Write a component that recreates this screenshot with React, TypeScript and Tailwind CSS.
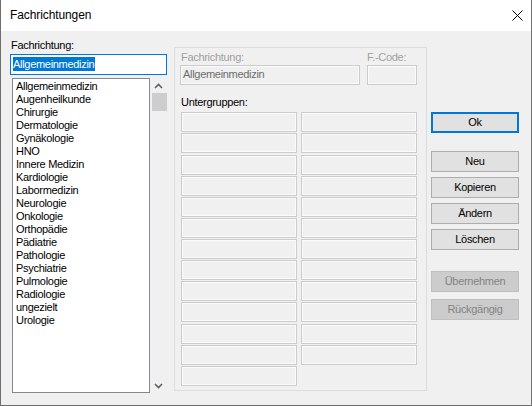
import React from "react";

const items = [
  "Allgemeinmedizin",
  "Augenheilkunde",
  "Chirurgie",
  "Dermatologie",
  "Gynäkologie",
  "HNO",
  "Innere Medizin",
  "Kardiologie",
  "Labormedizin",
  "Neurologie",
  "Onkologie",
  "Orthopädie",
  "Pädiatrie",
  "Pathologie",
  "Psychiatrie",
  "Pulmologie",
  "Radiologie",
  "ungezielt",
  "Urologie",
];

const col1 = [
  "mt-0",
  "mt-[1px]",
  "mt-[2px]",
  "mt-[1px]",
  "mt-[1px]",
  "mt-[1px]",
  "mt-[1px]",
  "mt-[1px]",
  "mt-[1px]",
  "mt-[1px]",
  "mt-[2px]",
  "mt-[1px]",
  "mt-[1px]",
];
const col2 = col1.slice(0, 12);

function Box({ cls }: { cls: string }) {
  return (
    <div
      className={
        cls +
        " h-[20px] w-[116px] border border-[#cccccc] bg-[#f0f0f0] shadow-[inset_0_0_0_1px_#fafafa]"
      }
    />
  );
}

function Btn({ label, cls }: { label: string; cls: string }) {
  return (
    <div
      className={
        cls +
        " h-[21px] w-[88px] border border-[#adadad] bg-[#e1e1e1] flex items-center justify-center"
      }
    >
      {label}
    </div>
  );
}

function DisBtn({ label, cls }: { label: string; cls: string }) {
  return (
    <div
      className={
        cls +
        " h-[21px] w-[88px] border border-[#bfbfbf] bg-[#cccccc] text-[#838383] flex items-center justify-center"
      }
    >
      {label}
    </div>
  );
}

export default function App() {
  return (
    <div className="w-[532px] h-[406px] bg-[#f0f0f0] flex flex-col border-x border-b border-[#6f6f6f] overflow-hidden font-['Liberation_Sans',Arial,sans-serif] text-[11px] leading-[13px] text-black tracking-[-0.3px]">
      {/* Title bar */}
      <div className="h-[31px] shrink-0 bg-white flex items-start justify-between">
        <div className="pl-[9px] pt-[7px] text-[12px] leading-[16px] tracking-[-0.1px]">
          Fachrichtungen
        </div>
        <svg
          className="mt-[10px] mr-[8px]"
          width="11"
          height="11"
          viewBox="0 0 11 11"
        >
          <path
            d="M0.5 0.5L10.5 10.5M10.5 0.5L0.5 10.5"
            stroke="#000"
            strokeWidth="1"
            fill="none"
          />
        </svg>
      </div>

      {/* Body */}
      <div className="flex">
        {/* Left column */}
        <div className="ml-[9px] w-[157px] flex flex-col">
          <div className="mt-[8px] pl-[1px]">Fachrichtung:</div>
          <div className="mt-[2px] h-[21px] border border-[#0078d7] bg-white pl-[2px] pt-[2px]">
            <span className="inline-block bg-[#0078d7] text-white leading-[14px] pr-[1px]">
              Allgemeinmedizin
            </span>
          </div>
          <div className="mt-[3px] flex">
            <div className="ml-[2px] w-[138px] h-[315px] border border-[#828790] bg-white pt-[1px] pl-[3px]">
              {items.map((it) => (
                <div key={it} className="leading-[13px] whitespace-nowrap">
                  {it}
                </div>
              ))}
            </div>
            <div className="w-[17px] h-[315px] bg-[#f0f0f0] flex flex-col items-center">
              <div className="h-[15px] w-full flex items-center justify-center">
                <svg width="9" height="6" viewBox="0 0 9 6" className="mt-[1px]">
                  <path
                    d="M1 5L4.5 1.5L8 5"
                    stroke="#606060"
                    strokeWidth="1.6"
                    fill="none"
                  />
                </svg>
              </div>
              <div className="ml-[1px] h-[18px] w-[15px] bg-[#cdcdcd]" />
              <div className="flex-1" />
              <div className="h-[15px] w-full flex items-center justify-center">
                <svg width="9" height="6" viewBox="0 0 9 6">
                  <path
                    d="M1 1L4.5 4.5L8 1"
                    stroke="#606060"
                    strokeWidth="1.6"
                    fill="none"
                  />
                </svg>
              </div>
            </div>
          </div>
        </div>

        {/* Group box */}
        <div className="ml-[7px] mt-[16px] w-[253px] h-[344px] border border-[#dcdcdc] flex flex-col">
          <div className="flex">
            <div className="ml-[5px] flex flex-col">
              <div className="mt-[3px] pl-[1px] text-[#a0a0a0]">Fachrichtung:</div>
              <div className="mt-[1px] h-[20px] w-[180px] border border-[#cccccc] bg-[#f0f0f0] shadow-[inset_0_0_0_1px_#fafafa] pl-[2px] pt-[2px] text-[#6d6d6d]">
                Allgemeinmedizin
              </div>
            </div>
            <div className="ml-[7px] flex flex-col">
              <div className="mt-[3px] text-[#a0a0a0]">F.-Code:</div>
              <div className="mt-[1px] h-[20px] w-[50px] border border-[#cccccc] bg-[#f0f0f0] shadow-[inset_0_0_0_1px_#fafafa]" />
            </div>
          </div>
          <div className="ml-[6px] mt-[11px]">Untergruppen:</div>
          <div className="mt-[3px] ml-[6px] flex items-start">
            <div className="flex flex-col">
              {col1.map((c, i) => (
                <Box key={i} cls={c} />
              ))}
            </div>
            <div className="ml-[4px] flex flex-col">
              {col2.map((c, i) => (
                <Box key={i} cls={c} />
              ))}
            </div>
          </div>
        </div>

        {/* Buttons */}
        <div className="ml-[4px] mt-[81px] w-[88px] flex flex-col">
          <div className="h-[21px] w-[88px] border-2 border-[#0078d7] bg-[#e1e1e1] flex items-center justify-center">
            Ok
          </div>
          <Btn label="Neu" cls="mt-[18px]" />
          <Btn label="Kopieren" cls="mt-[5px]" />
          <Btn label="Ändern" cls="mt-[5px]" />
          <Btn label="Löschen" cls="mt-[5px]" />
          <DisBtn label="Übernehmen" cls="mt-[21px]" />
          <DisBtn label="Rückgängig" cls="mt-[7px]" />
        </div>
      </div>
    </div>
  );
}
